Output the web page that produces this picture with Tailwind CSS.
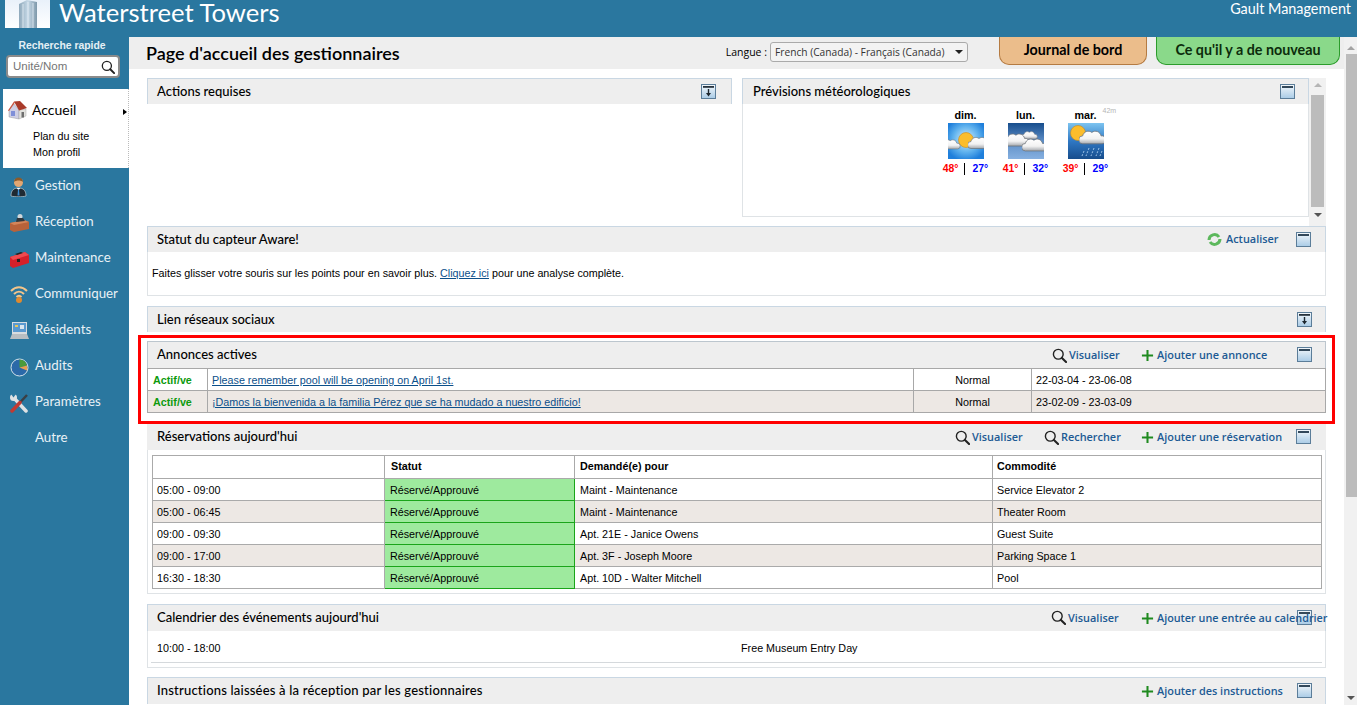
<!DOCTYPE html>
<html lang="fr">
<head>
<meta charset="utf-8">
<title>Waterstreet Towers</title>
<script src="https://cdn.jsdelivr.net/npm/@tailwindcss/browser@4"></script>
</head>
<body class="h-[705px] w-[1357px] overflow-hidden bg-white font-['Liberation_Sans',sans-serif] text-[10.75px] text-black">
<svg class="absolute h-0 w-0" width="0" height="0">
  <defs>
    <linearGradient id="tg" x1="0" y1="0" x2="0" y2="1"><stop offset="0" stop-color="#f4f8fb"/><stop offset="1" stop-color="#a9cbe6"/></linearGradient>
    <radialGradient id="w1" cx=".5" cy=".45" r=".6"><stop offset="0" stop-color="#d8f0fb"/><stop offset=".6" stop-color="#5fb2ee"/><stop offset="1" stop-color="#1f7fdb"/></radialGradient>
    <linearGradient id="w2" x1="0" y1="0" x2="0" y2="1"><stop offset="0" stop-color="#174d8c"/><stop offset=".5" stop-color="#5c8dc6"/><stop offset="1" stop-color="#86b0e0"/></linearGradient>
    <linearGradient id="w3" x1="0" y1="0" x2="0" y2="1"><stop offset="0" stop-color="#7dc4f0"/><stop offset=".5" stop-color="#2f78c4"/><stop offset="1" stop-color="#174d8c"/></linearGradient>
    <linearGradient id="cl" x1="0" y1="0" x2="0" y2="1"><stop offset="0" stop-color="#fff"/><stop offset=".6" stop-color="#f2f2f2"/><stop offset="1" stop-color="#a4a8ad"/></linearGradient>
    <linearGradient id="tower" x1="0" y1="0" x2="1" y2="0"><stop offset="0" stop-color="#8fa9bb"/><stop offset=".5" stop-color="#c5d8e6"/><stop offset="1" stop-color="#7e98aa"/></linearGradient>
    <symbol id="min" viewBox="0 0 15 15"><rect x=".5" y=".5" width="14" height="14" fill="url(#tg)" stroke="#5b7d99"/><rect x="2" y="2" width="11" height="2" fill="#33485a"/></symbol>
    <symbol id="max" viewBox="0 0 15 15"><rect x=".5" y=".5" width="14" height="14" fill="url(#tg)" stroke="#5b7d99"/><rect x="2" y="2" width="11" height="1.8" fill="#26323c"/><path d="M7.500 5v5" stroke="#1c262e" stroke-width="1.4"/><path d="M5 9h5l-2.500 3.500z" fill="#1c262e"/></symbol>
    <symbol id="loupe" viewBox="0 0 16 16"><circle cx="6.700" cy="6.700" r="5.200" fill="none" stroke="#222" stroke-width="1.500"/><path d="M10.600 10.600L15 15" stroke="#222" stroke-width="2.200" stroke-linecap="round"/></symbol>
    <symbol id="plus" viewBox="0 0 14 14"><path d="M7 1v12M1 7h12" stroke="#1f8a1f" stroke-width="2.200"/></symbol>
    <symbol id="cloud" viewBox="0 0 24 14"><path d="M3 13a3.500 3.500 0 0 1 0-7 5 5 0 0 1 8-3 5 5 0 0 1 8 3 3.500 3.500 0 0 1 1 7z" fill="url(#cl)" stroke="#6c7278" stroke-width=".7"/></symbol>
  </defs>
</svg>

<header class="flex h-[37px] items-start justify-between bg-[#2a779f] text-white">
  <div class="flex items-start">
    <div class="ml-[5px] flex h-[28px] w-[45px] justify-center bg-gradient-to-b from-[#e9f1fa] to-white">
      <svg width="18" height="28" viewBox="0 0 18 28"><path d="M0 28V4l8-4 10 2v26z" fill="url(#tower)"/><path d="M4 4v24M9 2v26M14 3v25" stroke="#e6eff6" stroke-width=".8"/></svg>
    </div>
    <span class="ml-[9px] font-['Lato',sans-serif] text-[25.6px] leading-[24px]">Waterstreet Towers</span>
  </div>
  <span class="mr-[6px] font-['Lato',sans-serif] text-[14.4px] leading-[17px]">Gault Management</span>
</header>

<div class="flex h-[668px]">
  <aside class="h-full w-[129px] shrink-0 bg-[#2a779f]">
    <div class="pr-[5px] pt-[2px] text-center text-[10.4px] font-bold leading-[13px] text-[#e4eff5]">Recherche rapide</div>
    <div class="ml-[6px] mt-[3px] flex h-[23px] w-[114px] items-center justify-between rounded-[4px] border-2 border-[#8b8b8b] bg-white pl-[5px] pr-[3px]">
      <span class="text-[11.5px] text-[#757575]">Unité/Nom</span>
      <svg width="14" height="14"><use href="#loupe"/></svg>
    </div>
    <div class="relative ml-[3px] mt-[11px] h-[79px] border-r border-dotted border-[#bbb] bg-white">
      <div class="flex h-[39px] items-center pl-[5px] pt-[2px]">
        <svg width="19" height="20" viewBox="0 0 19 20"><path d="M1 10l5-6 5 6v9l-10-2z" fill="#cfcfe4" stroke="#8a8a8a" stroke-width=".4"/><path d="M11 10l7-1v7l-7 3z" fill="#e2e2de" stroke="#9a9a9a" stroke-width=".4"/><path d="M6 1.500L12 1l7 7-8 2.500z" fill="#a93a2a"/><path d="M0 10.500L6 1.500l1 1-6 8.500z" fill="#c9523e"/><rect x="3" y="11" width="4" height="5" fill="#7f8fd8"/><rect x="13.500" y="12" width="2.500" height="5.500" fill="#6f6f6f"/></svg>
        <span class="ml-[5px] font-['Lato',sans-serif] text-[14px]">Accueil</span>
      </div>
      <div class="absolute right-[1px] top-[20px] h-0 w-0 border-y-[3.5px] border-l-[4px] border-y-transparent border-l-black"></div>
      <a class="ml-[30px] block leading-[16px]">Plan du site</a>
      <a class="ml-[30px] block leading-[16px]">Mon profil</a>
    </div>
    <nav class="font-['Lato',sans-serif] text-[13.3px] text-[#e8f1f6]">
      <div class="flex h-[36px] items-center pl-[10px]">
        <svg class="mt-[2px] w-[25px]" width="25" height="20" viewBox="0 0 25 20"><path d="M1 19c0-6 3-8 7.500-8S16 13 16 19c-3 1-12 1-15 0z" fill="#1f2a33" stroke="#d5dde2" stroke-width=".6"/><circle cx="8.500" cy="5.500" r="4.500" fill="#e3a772"/><path d="M4 5a4.500 4.500 0 0 1 9 0c-2-2-7-2-9 0z" fill="#8b5a2b"/><path d="M6.500 11h4l-2 2z" fill="#fff"/><path d="M8 12.500h1l.5 6h-2z" fill="#3b8fd6"/></svg>
        <span>Gestion</span>
      </div>
      <div class="flex h-[36px] items-center pl-[10px]">
        <svg class="mt-[2px] w-[25px]" width="25" height="18" viewBox="0 0 25 18"><path d="M0 9l14-3 5 2v7L4 18 0 16z" fill="#b8623a"/><path d="M0 9l14-3 5 2-15 3z" fill="#d4855a"/><circle cx="10" cy="2.500" r="2.500" fill="#cfd6da"/><path d="M6 8l1-4h6l2 3z" fill="#30383e"/></svg>
        <span>Réception</span>
      </div>
      <div class="flex h-[36px] items-center pl-[10px]">
        <svg class="mt-[2px] w-[25px]" width="25" height="18" viewBox="0 0 25 18"><path d="M0 7l15-5 4 3v8L3 18 0 16z" fill="#d5202a"/><path d="M0 7l15-5 4 3-16 5z" fill="#ee4a4f"/><path d="M5 4l6-2 2 1-6 2z" fill="#222"/><rect x="7" y="9" width="3" height="3" fill="#222"/></svg>
        <span>Maintenance</span>
      </div>
      <div class="flex h-[36px] items-center pl-[10px]">
        <svg class="mt-[2px] w-[25px]" width="25" height="18" viewBox="0 0 25 18" fill="none" stroke="#f3c58a" stroke-width="2"><path d="M1 5c5-5 11-5 16 0M4 8c3-3 7-3 10 0M6.500 11c1.500-1.500 3.500-1.500 5 0"/><circle cx="9" cy="14" r="3" fill="#e08a2e" stroke="none"/></svg>
        <span>Communiquer</span>
      </div>
      <div class="flex h-[36px] items-center pl-[10px]">
        <svg class="mt-[2px] w-[25px]" width="25" height="18" viewBox="0 0 25 18"><rect x="2" y="0" width="15" height="12" fill="#d8dde0"/><rect x="3" y="1" width="13" height="9" fill="#5a9ad0"/><rect x="5" y="3" width="3" height="2" fill="#e9c85a"/><rect x="10" y="3" width="4" height="4" fill="#d9e6ef"/><path d="M2 12h15l2 5H0z" fill="#b8bec2"/></svg>
        <span>Résidents</span>
      </div>
      <div class="flex h-[36px] items-center pl-[10px]">
        <svg class="mt-[2px] w-[25px]" width="25" height="19" viewBox="0 0 25 19"><circle cx="9.500" cy="9.500" r="8.500" fill="#2b69a8" stroke="#d5e2ea"/><path d="M9.500 9.500V1.500a8 8 0 0 1 7.500 6z" fill="#4b9b3a"/><path d="M9.500 9.500L17 7.500a8.500 8.500 0 0 1 0 5z" fill="#e8a050"/></svg>
        <span>Audits</span>
      </div>
      <div class="flex h-[36px] items-center pl-[10px]">
        <svg class="mt-[2px] w-[25px]" width="25" height="19" viewBox="0 0 25 19"><path d="M4 4l12 13" stroke="#dfe2e4" stroke-width="3.500" stroke-linecap="round"/><circle cx="3.500" cy="3.500" r="3.500" fill="#dfe2e4"/><path d="M3.500 3.500L1 0h5z" fill="#2a779f"/><path d="M17 1l-7 7.500" stroke="#3a3f44" stroke-width="2.500"/><path d="M10 8.500L2 17" stroke="#c23a32" stroke-width="3.500" stroke-linecap="round"/></svg>
        <span>Paramètres</span>
      </div>
      <div class="flex h-[36px] items-center pl-[35px]">Autre</div>
    </nav>
  </aside>

  <main class="h-full w-[1215px] shrink-0 overflow-hidden">
    <div class="flex h-[32px] items-start justify-between bg-[#eeeeee]">
      <h1 class="ml-[17px] mt-[4px] font-['Lato',sans-serif] text-[18px] font-semibold leading-[24px]">Page d'accueil des gestionnaires</h1>
      <div class="flex items-start">
        <label class="mr-[3px] mt-[8px] font-['Open_Sans',sans-serif] text-[10.5px] leading-[14px]">Langue :</label>
        <div class="relative mt-[5px]">
          <select class="block h-[20px] w-[198px] appearance-none rounded-[3px] border border-[#aaa] bg-[#f3f3f3] pl-[4px] pt-[2px] font-['Open_Sans',sans-serif] text-[10.2px] text-[#333]"><option>French (Canada) - Français (Canada)</option></select>
          <div class="pointer-events-none absolute right-[5px] top-[8px] h-0 w-0 border-x-[4px] border-t-[4px] border-x-transparent border-t-[#222]"></div>
        </div>
        <button class="ml-[31px] flex h-[28px] w-[148px] items-center justify-center rounded-b-[10px] border border-t-0 border-[#b57b42] bg-[#ebbd8b] pb-[2px] font-['Lato',sans-serif] text-[14.3px] font-bold">Journal de bord</button>
        <button class="ml-[9px] mr-[4px] flex h-[28px] w-[184px] items-center justify-center rounded-b-[10px] border border-t-0 border-[#2c9c2c] bg-[#8ad98a] pb-[2px] font-['Lato',sans-serif] text-[14.3px] font-bold text-[#0c2c0c]">Ce qu'il y a de nouveau</button>
      </div>
    </div>

    <div class="pl-[18px] pr-[18px] pt-[9px]">
      <div class="flex h-[148px]">
        <section class="h-[139px] w-[585px] shrink-0">
          <div class="relative flex h-[26px] items-center border-l border-t border-r border-[#c9d7e3] bg-[#eeeeee] pl-[9px] font-['Lato',sans-serif] text-[13px] font-medium">Actions requises
            <svg class="absolute right-[15px] top-[5px]" width="15" height="15"><use href="#max"/></svg>
          </div>
        </section>
        <section class="ml-[10px] h-[139px] w-[567px] shrink-0 border border-[#dfe3e6]">
          <div class="relative -mx-px -mt-px flex h-[26px] items-center border-l border-t border-r border-[#c9d7e3] bg-[#eeeeee] pl-[10px] font-['Lato',sans-serif] text-[13px] font-medium">Prévisions météorologiques
            <svg class="absolute right-[13px] top-[5px]" width="15" height="15"><use href="#min"/></svg>
          </div>
          <div class="relative flex justify-center pt-[5px] font-bold">
            <div class="w-[60px] text-center">
              <div class="leading-[13px]">dim.</div>
              <svg class="mx-auto mt-[1px]" width="36" height="36" viewBox="0 0 36 36"><rect width="36" height="36" fill="url(#w1)"/><circle cx="18" cy="17" r="7.500" fill="#fbbd2c" stroke="#c68a20" stroke-width=".6"/><svg x="-7" y="15" width="20" height="12" viewBox="0 0 24 14"><use href="#cloud"/></svg><svg x="20" y="12" width="24" height="15" viewBox="0 0 24 14"><use href="#cloud"/></svg></svg>
              <div class="mt-[4px] flex justify-center text-[10.4px] leading-[12px]"><span class="pr-[5px] text-[#ff0000]">48°</span><span class="border-l border-black pl-[8px] text-[#0000ff]">27°</span></div>
            </div>
            <div class="w-[60px] text-center">
              <div class="leading-[13px]">lun.</div>
              <svg class="mx-auto mt-[1px]" width="36" height="36" viewBox="0 0 36 36"><rect width="36" height="36" fill="url(#w2)"/><svg x="14" y="7" width="16" height="10" viewBox="0 0 24 14"><use href="#cloud"/></svg><svg x="-4" y="8" width="26" height="17" viewBox="0 0 24 14"><use href="#cloud"/></svg><svg x="14" y="14" width="26" height="15" viewBox="0 0 24 14"><use href="#cloud"/></svg></svg>
              <div class="mt-[4px] flex justify-center text-[10.4px] leading-[12px]"><span class="pr-[5px] text-[#ff0000]">41°</span><span class="border-l border-black pl-[8px] text-[#0000ff]">32°</span></div>
            </div>
            <div class="relative w-[60px] text-center">
              <div class="leading-[13px]">mar.</div>
              <span class="absolute left-[47px] top-[-3px] text-[7px] font-normal text-[#b5b5b5]">42m</span>
              <svg class="mx-auto mt-[1px]" width="36" height="36" viewBox="0 0 36 36"><rect width="36" height="36" fill="url(#w3)"/><circle cx="10" cy="10" r="7.500" fill="#fbbd2c" stroke="#c68a20" stroke-width=".6"/><svg x="11" y="6" width="28" height="16" viewBox="0 0 24 14"><use href="#cloud"/></svg><path d="M16 28l-2 5M21 25l-3 8M26 25l-3 8M31 25l-3 8M34 28l-2 5" stroke="#9cc2e6" stroke-width="1" stroke-dasharray="2 1.500"/></svg>
              <div class="mt-[4px] flex justify-center text-[10.4px] leading-[12px]"><span class="pr-[5px] text-[#ff0000]">39°</span><span class="border-l border-black pl-[8px] text-[#0000ff]">29°</span></div>
            </div>
          </div>
        </section>
        <div class="flex h-[148px] w-[17px] shrink-0 flex-col items-center bg-[#f1f1f1] px-[2px]">
          <div class="mt-[5px] h-0 w-0 border-x-[4px] border-b-[4px] border-x-transparent border-b-[#b5b5b5]"></div>
          <div class="mt-[8px] h-[112px] w-[13px] bg-[#bcbcbc]"></div>
          <div class="mt-[6px] h-0 w-0 border-x-[4px] border-t-[4px] border-x-transparent border-t-[#555]"></div>
        </div>
      </div>

      <section class="mb-[10px] h-[70px] border border-[#dfe3e6]">
        <div class="-mx-px -mt-px flex h-[26px] items-center border-l border-t border-r border-[#c9d7e3] bg-[#eeeeee] pl-[9px] font-['Lato',sans-serif] text-[13px] font-medium">
          <span class="flex-1">Statut du capteur Aware!</span>
          <a class="relative flex h-full w-[118px] items-center font-['Open_Sans',sans-serif] text-[10.9px] font-semibold text-[#1c5a94]">
            <svg class="mr-[4px] shrink-0" width="15" height="15" viewBox="0 0 15 15" fill="none" stroke="#5cb85c" stroke-width="3"><path d="M2 8a5.500 5.500 0 0 1 10-3"/><path d="M13 7a5.500 5.500 0 0 1-10 3"/></svg>Actualiser
            <svg class="absolute right-[14px] top-[5px]" width="15" height="15"><use href="#min"/></svg>
          </a>
        </div>
        <p class="pl-[4px] pt-[15px] leading-[12px]">Faites glisser votre souris sur les points pour en savoir plus. <a class="text-[#0b4f8a] underline">Cliquez ici</a> pour une analyse complète.</p>
      </section>

      <section class="relative mb-[9px] flex h-[26px] items-center border-l border-t border-r border-[#c9d7e3] bg-[#eeeeee] pl-[9px] font-['Lato',sans-serif] text-[13px] font-medium">Lien réseaux sociaux
        <svg class="absolute right-[13px] top-[5px]" width="15" height="15"><use href="#max"/></svg>
      </section>

      <section class="relative mb-[10px]">
        <div class="flex h-[27px] items-center border-l border-t border-r border-[#bcc6ce] bg-[#eeeeee] pl-[9px] font-['Lato',sans-serif] text-[13px] font-medium">
          <span class="flex-1">Annonces actives</span>
          <a class="flex w-[89px] items-center pt-[1px] font-['Open_Sans',sans-serif] text-[10.9px] font-semibold text-[#1c5a94]"><svg class="mr-[2px] shrink-0" width="15" height="15"><use href="#loupe"/></svg>Visualiser</a>
          <a class="relative flex h-[27px] w-[184px] items-center pt-[1px] font-['Open_Sans',sans-serif] text-[10.9px] font-semibold text-[#1c5a94]"><svg class="mr-[3px] shrink-0" width="13" height="13"><use href="#plus"/></svg>Ajouter une annonce
            <svg class="absolute right-[13px] top-[5px]" width="15" height="15"><use href="#min"/></svg></a>
        </div>
        <table class="w-full table-fixed border-collapse border border-[#a0a0a0] [&_td]:pt-[1px]">
          <colgroup><col class="w-[60px]"><col class="w-[706px]"><col class="w-[118px]"><col></colgroup>
          <tr class="h-[22px]"><td class="border border-[#a8a8a8] pl-[5px] font-bold text-[#0d9a0d]">Actif/ve</td><td class="border border-[#a8a8a8] pl-[4px]"><a class="text-[#0b4f8a] underline">Please remember pool will be opening on April 1st.</a></td><td class="border border-[#a8a8a8] text-center">Normal</td><td class="border border-[#a8a8a8] pl-[4px]">22-03-04 - 23-06-08</td></tr>
          <tr class="h-[22px] bg-[#ede8e4]"><td class="border border-[#a8a8a8] pl-[5px] font-bold text-[#0d9a0d]">Actif/ve</td><td class="border border-[#a8a8a8] pl-[4px]"><a class="text-[#0b4f8a] underline">¡Damos la bienvenida a la familia Pérez que se ha mudado a nuestro edificio!</a></td><td class="border border-[#a8a8a8] text-center">Normal</td><td class="border border-[#a8a8a8] pl-[4px]">23-02-09 - 23-03-09</td></tr>
        </table>
        <div class="pointer-events-none absolute inset-x-[-9px] bottom-[-11px] top-[-6px] border-[3px] border-[#ff0000]"></div>
      </section>

      <section class="mb-[10px] h-[171px] border border-[#dfe3e6]">
        <div class="-mx-px -mt-px flex h-[27px] items-center bg-[#eeeeee] pl-[10px] font-['Lato',sans-serif] text-[13px] font-medium">
          <span class="flex-1">Réservations aujourd'hui</span>
          <a class="flex w-[89px] items-center pt-[2px] font-['Open_Sans',sans-serif] text-[10.9px] font-semibold text-[#1c5a94]"><svg class="mr-[2px] shrink-0" width="15" height="15"><use href="#loupe"/></svg>Visualiser</a>
          <a class="flex w-[97px] items-center pt-[2px] font-['Open_Sans',sans-serif] text-[10.9px] font-semibold text-[#1c5a94]"><svg class="mr-[2px] shrink-0" width="15" height="15"><use href="#loupe"/></svg>Rechercher</a>
          <a class="relative flex h-[27px] w-[185px] items-center pt-[2px] font-['Open_Sans',sans-serif] text-[10.9px] font-semibold text-[#1c5a94]"><svg class="mr-[3px] shrink-0" width="13" height="13"><use href="#plus"/></svg>Ajouter une réservation
            <svg class="absolute right-[15px] top-[6px]" width="15" height="15"><use href="#min"/></svg></a>
        </div>
        <table class="ml-[4px] mt-[5px] w-[1170px] table-fixed border-collapse border border-[#8a8a8a] [&_td]:pt-[1px]">
          <colgroup><col class="w-[232px]"><col class="w-[190px]"><col class="w-[418px]"><col></colgroup>
          <tr class="h-[23px] font-bold"><td class="border border-[#aaa]"></td><td class="border border-[#aaa] pb-[3px] pl-[6px]">Statut</td><td class="border border-[#aaa] pb-[3px] pl-[5px]">Demandé(e) pour</td><td class="border border-[#aaa] pb-[3px] pl-[4px]">Commodité</td></tr>
          <tr class="h-[22px]"><td class="border border-[#aaa] pl-[4px]">05:00 - 09:00</td><td class="border border-[#1aa51a] bg-[#9eea9e] pl-[5px]">Réservé/Approuvé</td><td class="border border-[#aaa] pl-[5px]">Maint - Maintenance</td><td class="border border-[#aaa] pl-[4px]">Service Elevator 2</td></tr>
          <tr class="h-[22px] bg-[#ede8e4]"><td class="border border-[#aaa] pl-[4px]">05:00 - 06:45</td><td class="border border-[#1aa51a] bg-[#9eea9e] pl-[5px]">Réservé/Approuvé</td><td class="border border-[#aaa] pl-[5px]">Maint - Maintenance</td><td class="border border-[#aaa] pl-[4px]">Theater Room</td></tr>
          <tr class="h-[22px]"><td class="border border-[#aaa] pl-[4px]">09:00 - 09:30</td><td class="border border-[#1aa51a] bg-[#9eea9e] pl-[5px]">Réservé/Approuvé</td><td class="border border-[#aaa] pl-[5px]">Apt. 21E - Janice Owens</td><td class="border border-[#aaa] pl-[4px]">Guest Suite</td></tr>
          <tr class="h-[22px] bg-[#ede8e4]"><td class="border border-[#aaa] pl-[4px]">09:00 - 17:00</td><td class="border border-[#1aa51a] bg-[#9eea9e] pl-[5px]">Réservé/Approuvé</td><td class="border border-[#aaa] pl-[5px]">Apt. 3F - Joseph Moore</td><td class="border border-[#aaa] pl-[4px]">Parking Space 1</td></tr>
          <tr class="h-[22px]"><td class="border border-[#aaa] pl-[4px]">16:30 - 18:30</td><td class="border border-[#1aa51a] bg-[#9eea9e] pl-[5px]">Réservé/Approuvé</td><td class="border border-[#aaa] pl-[5px]">Apt. 10D - Walter Mitchell</td><td class="border border-[#aaa] pl-[4px]">Pool</td></tr>
        </table>
      </section>

      <section class="mb-[9px] h-[64px] border border-[#dfe3e6]">
        <div class="-mx-px -mt-px flex h-[27px] items-center border-l border-t border-r border-[#c9d7e3] bg-[#eeeeee] pl-[9px] font-['Lato',sans-serif] text-[13px] font-medium">
          <span class="flex-1">Calendrier des événements aujourd'hui</span>
          <a class="flex w-[90px] items-center font-['Open_Sans',sans-serif] text-[10.9px] font-semibold text-[#1c5a94]"><svg class="mr-[2px] shrink-0" width="15" height="15"><use href="#loupe"/></svg>Visualiser</a>
          <a class="relative flex h-[27px] w-[184px] items-center font-['Open_Sans',sans-serif] text-[10.8px] font-semibold text-[#1c5a94]"><svg class="absolute right-[13px] top-[5px]" width="15" height="15"><use href="#min"/></svg><svg class="mr-[3px] shrink-0" width="13" height="13"><use href="#plus"/></svg><span class="relative whitespace-nowrap">Ajouter une entrée au calendrier</span></a>
        </div>
        <div class="mx-[3px] flex h-[32px] items-center border-b border-[#d5d9dc] pl-[6px] pt-[3px]">
          <span class="w-[584px]">10:00 - 18:00</span><span>Free Museum Entry Day</span>
        </div>
      </section>

      <section class="flex h-[27px] items-center border-l border-t border-r border-[#c9d7e3] bg-[#eeeeee] pl-[9px] font-['Lato',sans-serif] text-[13px] font-medium tracking-[.2px]">
        <span class="flex-1">Instructions laissées à la réception par les gestionnaires</span>
        <a class="relative flex h-[27px] w-[184px] items-center font-['Open_Sans',sans-serif] text-[10.9px] font-semibold tracking-normal text-[#1c5a94]"><svg class="mr-[3px] shrink-0" width="13" height="13"><use href="#plus"/></svg>Ajouter des instructions
          <svg class="absolute right-[13px] top-[5px]" width="15" height="15"><use href="#min"/></svg></a>
      </section>
    </div>
  </main>

  <div class="flex h-full w-[13px] shrink-0 flex-col items-center bg-[#f1f1f1]">
    <div class="mt-[9px] h-0 w-0 border-x-[4px] border-b-[4px] border-x-transparent border-b-[#a3a3a3]"></div>
    <div class="ml-[2px] mt-[4px] h-[443px] w-[11px] bg-[#bcbcbc]"></div>
    <div class="mt-auto mb-[5px] h-0 w-0 border-x-[4px] border-t-[4px] border-x-transparent border-t-[#555]"></div>
  </div>
</div>
</body>
</html>
